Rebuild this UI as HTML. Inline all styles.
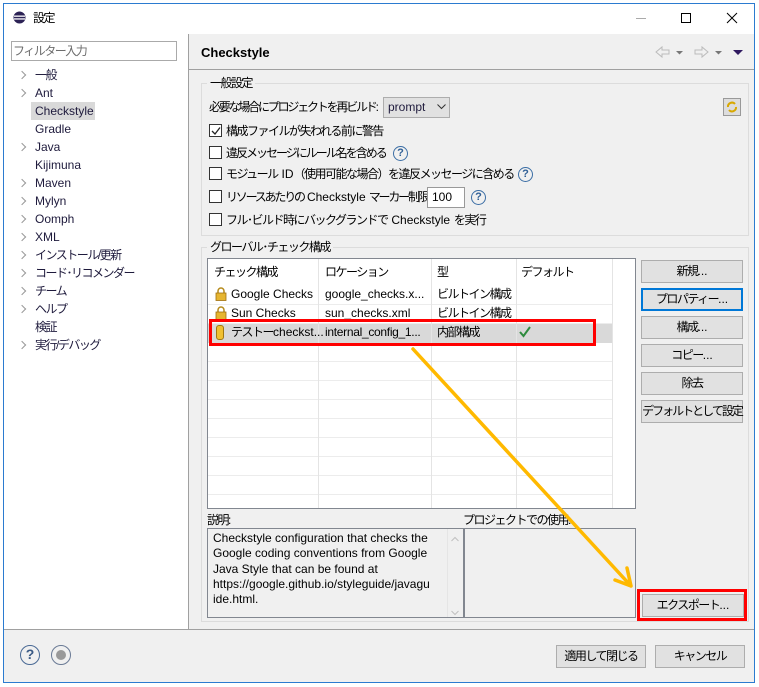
<!DOCTYPE html>
<html><head><meta charset="utf-8"><style>
*{box-sizing:border-box;margin:0;padding:0}
body{width:759px;height:687px;background:#fff;position:relative;overflow:hidden;font-family:"Liberation Sans","Noto Sans CJK JP",sans-serif;font-size:12px;color:#000}
.a{position:absolute;white-space:nowrap}
.t{line-height:18px}
.j{letter-spacing:-1.5px;word-spacing:2px}
.j .l{letter-spacing:0}
.tree{color:#1e1a3c}
.arr{position:absolute;left:19px;width:6px;height:6px;border-right:1.5px solid #999;border-top:1.5px solid #999;transform:rotate(45deg)}
.btn{position:absolute;background:#e1e1e1;border:1px solid #adadad;text-align:center;line-height:21px;font-size:12px;white-space:nowrap;letter-spacing:-1.5px}
.cb{position:absolute;width:13px;height:13px;border:1px solid #333;background:#fff}
.q{position:absolute;width:15px;height:15px;border:1.5px solid #3b6ea5;border-radius:50%;color:#2f5f96;font-weight:bold;font-size:11px;line-height:12px;text-align:center}
.vl{position:absolute;width:1px;background:#e4e4e4}
.hl{position:absolute;height:1px;background:#ececec;left:208px;width:405px}
</style></head><body>
<div class="a" style="left:3px;top:3px;width:752px;height:680px;border:1px solid #2b7bd0;background:#fff"></div>
<svg class="a" style="left:13px;top:11px" width="13" height="13"><circle cx="6.5" cy="6.5" r="6" fill="#2c2255"/><rect x="1" y="4.5" width="11" height="1.3" fill="#fff"/><rect x="1" y="7.3" width="11" height="1.3" fill="#fff"/></svg>
<div class="a j" style="left:33px;top:9px">設定</div>
<div class="a" style="left:636px;top:18px;width:10px;height:1px;background:#aaa"></div>
<div class="a" style="left:681px;top:13px;width:10px;height:10px;border:1px solid #000"></div>
<svg class="a" style="left:726px;top:12px" width="12" height="12"><path d="M1 1L11 11M11 1L1 11" stroke="#000" stroke-width="1"/></svg>
<div class="a" style="left:11px;top:41px;width:166px;height:20px;border:1px solid #aaa"></div>
<div class="a j" style="left:13px;top:42px;color:#6d6d6d;line-height:18px">フィルター入力</div>
<div class="a" style="left:31px;top:102px;width:64px;height:18px;background:#d9d9d9"></div>
<div class="arr" style="top:72px"></div><div class="a t tree j" style="left:35px;top:66px">一般</div>
<div class="arr" style="top:90px"></div><div class="a t tree" style="left:35px;top:84px">Ant</div>
<div class="a t tree" style="left:35px;top:102px">Checkstyle</div>
<div class="a t tree" style="left:35px;top:120px">Gradle</div>
<div class="arr" style="top:144px"></div><div class="a t tree" style="left:35px;top:138px">Java</div>
<div class="a t tree" style="left:35px;top:156px">Kijimuna</div>
<div class="arr" style="top:180px"></div><div class="a t tree" style="left:35px;top:174px">Maven</div>
<div class="arr" style="top:198px"></div><div class="a t tree" style="left:35px;top:192px">Mylyn</div>
<div class="arr" style="top:216px"></div><div class="a t tree" style="left:35px;top:210px">Oomph</div>
<div class="arr" style="top:234px"></div><div class="a t tree" style="left:35px;top:228px">XML</div>
<div class="arr" style="top:252px"></div><div class="a t tree j" style="left:35px;top:246px">インストール/更新</div>
<div class="arr" style="top:270px"></div><div class="a t tree j" style="left:35px;top:264px">コード･リコメンダー</div>
<div class="arr" style="top:288px"></div><div class="a t tree j" style="left:35px;top:282px">チーム</div>
<div class="arr" style="top:306px"></div><div class="a t tree j" style="left:35px;top:300px">ヘルプ</div>
<div class="a t tree j" style="left:35px;top:318px">検証</div>
<div class="arr" style="top:342px"></div><div class="a t tree j" style="left:35px;top:336px">実行/デバッグ</div>
<div class="a" style="left:188px;top:34px;width:566px;height:596px;background:#f0f0f0;border-left:1px solid #a0a0a0"></div>
<div class="a" style="left:4px;top:629px;width:750px;height:53px;background:#f0f0f0;border-top:1px solid #a0a0a0"></div>
<div class="a" style="left:201px;top:44px;font-weight:bold;font-size:13px;line-height:18px">Checkstyle</div>
<div class="a" style="left:189px;top:69px;width:565px;height:1px;background:#a0a0a0"></div>
<svg class="a" style="left:654px;top:44px" width="95" height="16">
<path d="M2 8L8 3V6H15V10H8V13Z" fill="none" stroke="#bbb"/><path d="M22 7h7l-3.5 3.5z" fill="#777"/>
<path d="M54 8L48 3V6H41V10H48V13Z" fill="none" stroke="#bbb"/><path d="M61 7h7l-3.5 3.5z" fill="#777"/>
<path d="M79 6h10l-5 5z" fill="#301a60"/></svg>
<div class="a" style="left:201px;top:83px;width:548px;height:153px;border:1px solid #dcdcdc"></div>
<div class="a j" style="left:207px;top:75px;background:#f0f0f0;padding:0 3px;line-height:16px">一般設定</div>
<div class="a j" style="left:209px;top:98px;line-height:18px;letter-spacing:-2.2px">必要な場合にプロジェクトを再ビルド<span class="l">:</span></div>
<div class="a" style="left:383px;top:97px;width:67px;height:21px;border:1px solid #adadad;background:#e1e1e1"></div>
<div class="a" style="left:388px;top:98px;line-height:18px;color:#1e1a3c">prompt</div>
<svg class="a" style="left:437px;top:104px" width="9" height="6"><path d="M0.5 0.5L4.5 4.5L8.5 0.5" fill="none" stroke="#333"/></svg>
<div class="a" style="left:723px;top:98px;width:18px;height:18px;border:1px solid #999;background:#ddd"></div>
<svg class="a" style="left:725px;top:100px" width="14" height="14"><path d="M3 7A4 4 0 0 1 10 4M11 7A4 4 0 0 1 4 10" fill="none" stroke="#d8a800" stroke-width="2"/></svg>
<div class="cb" style="left:209px;top:124px"></div>
<svg class="a" style="left:211px;top:126px" width="10" height="10"><path d="M1 5L4 8L9 1.5" fill="none" stroke="#222" stroke-width="1.3"/></svg>
<div class="a t j" style="left:226px;top:122px">構成ファイルが失われる前に警告</div>
<div class="cb" style="left:209px;top:146px"></div>
<div class="a t j" style="left:226px;top:144px;letter-spacing:-2px">違反メッセージにルール名を含める</div>
<div class="q" style="left:393px;top:146px">?</div>
<div class="cb" style="left:209px;top:167px"></div>
<div class="a t j" style="left:226px;top:165px">モジュール <span class="l">ID</span>（使用可能な場合）を違反メッセージに含める</div>
<div class="q" style="left:518px;top:167px">?</div>
<div class="cb" style="left:209px;top:190px"></div>
<div class="a t j" style="left:226px;top:188px;letter-spacing:-2.2px">リソースあたりの <span class="l">Checkstyle</span> マーカー制限</div>
<div class="a" style="left:427px;top:187px;width:38px;height:21px;border:1px solid #999;background:#fff;padding-left:4px;line-height:19px">100</div>
<div class="q" style="left:471px;top:190px">?</div>
<div class="cb" style="left:209px;top:213px"></div>
<div class="a t j" style="left:226px;top:211px">フル･ビルド時にバックグランドで <span class="l">Checkstyle</span> を実行</div>
<div class="a" style="left:201px;top:247px;width:548px;height:375px;border:1px solid #dcdcdc"></div>
<div class="a j" style="left:207px;top:239px;background:#f0f0f0;padding:0 3px;line-height:16px">グローバル･チェック構成</div>
<div class="a" style="left:207px;top:258px;width:429px;height:251px;border:1px solid #828790;background:#fff"></div>
<div class="hl" style="top:304px"></div><div class="hl" style="top:323px"></div><div class="hl" style="top:342px"></div><div class="hl" style="top:361px"></div><div class="hl" style="top:380px"></div><div class="hl" style="top:399px"></div><div class="hl" style="top:418px"></div><div class="hl" style="top:437px"></div><div class="hl" style="top:456px"></div><div class="hl" style="top:475px"></div><div class="hl" style="top:494px"></div>
<div class="a" style="left:208px;top:324px;width:405px;height:19px;background:#d9d9d9"></div>
<div class="vl" style="left:318px;top:259px;height:249px"></div>
<div class="vl" style="left:431px;top:259px;height:249px"></div>
<div class="vl" style="left:516px;top:259px;height:249px"></div>
<div class="vl" style="left:612px;top:259px;height:249px"></div>
<div class="a t j" style="left:214px;top:263px">チェック構成</div>
<div class="a t j" style="left:325px;top:263px">ロケーション</div>
<div class="a t j" style="left:437px;top:263px">型</div>
<div class="a t j" style="left:521px;top:263px">デフォルト</div>
<svg class="a" style="left:215px;top:287px" width="12" height="14"><path d="M3 6V4a3 3 0 0 1 6 0V6" fill="none" stroke="#b58a1a" stroke-width="1.5"/><rect x="1" y="6" width="10" height="7.5" fill="#e6b530" stroke="#a07010" stroke-width=".8"/></svg>
<div class="a t" style="left:231px;top:285px">Google Checks</div>
<div class="a t" style="left:325px;top:285px">google_checks.x...</div>
<div class="a t j" style="left:437px;top:285px">ビルトイン構成</div>
<svg class="a" style="left:215px;top:306px" width="12" height="14"><path d="M3 6V4a3 3 0 0 1 6 0V6" fill="none" stroke="#b58a1a" stroke-width="1.5"/><rect x="1" y="6" width="10" height="7.5" fill="#e6b530" stroke="#a07010" stroke-width=".8"/></svg>
<div class="a t" style="left:231px;top:304px">Sun Checks</div>
<div class="a t" style="left:325px;top:304px">sun_checks.xml</div>
<div class="a t j" style="left:437px;top:304px">ビルトイン構成</div>
<div class="a" style="left:216px;top:325px;width:8px;height:15px;background:#f0c030;border:1px solid #a07810;border-radius:3px"></div>
<div class="a t j" style="left:231px;top:323px">テストー<span class="l">checkst...</span></div>
<div class="a t" style="left:325px;top:323px;letter-spacing:-0.3px">internal_config_1...</div>
<div class="a t j" style="left:437px;top:323px">内部構成</div>
<svg class="a" style="left:519px;top:326px" width="12" height="12"><path d="M1 6L4.5 10L11 1" fill="none" stroke="#2e8b3e" stroke-width="2"/></svg>
<div class="a" style="left:209px;top:319px;width:387px;height:27px;border:3px solid #f00"></div>
<div class="btn" style="left:641px;top:260px;width:102px;height:23px">新規<span style="letter-spacing:0">...</span></div>
<div class="btn" style="left:641px;top:288px;width:102px;height:23px;border:2px solid #0078d7;line-height:19px">プロパティー<span style="letter-spacing:0">...</span></div>
<div class="btn" style="left:641px;top:316px;width:102px;height:23px">構成<span style="letter-spacing:0">...</span></div>
<div class="btn" style="left:641px;top:344px;width:102px;height:23px">コピー<span style="letter-spacing:0">...</span></div>
<div class="btn" style="left:641px;top:372px;width:102px;height:23px">除去</div>
<div class="btn" style="left:641px;top:400px;width:102px;height:23px;letter-spacing:-2px">デフォルトとして設定</div>
<div class="a j" style="left:207px;top:512px;line-height:16px">説明<span class="l">:</span></div>
<div class="a j" style="left:463px;top:512px;line-height:16px">プロジェクトでの使用<span class="l">:</span></div>
<div class="a" style="left:207px;top:528px;width:257px;height:90px;border:1px solid #828790;background:#f0f0f0"></div>
<div class="a" style="left:213px;top:531px;line-height:15.3px">Checkstyle configuration that checks the<br>Google coding conventions from Google<br>Java Style that can be found at<br>https://google.github.io/styleguide/javagu<br>ide.html.</div>
<div class="a" style="left:447px;top:529px;width:16px;height:88px;background:#f0f0f0;border-left:1px solid #e5e5e5"></div>
<svg class="a" style="left:451px;top:536px" width="8" height="82"><path d="M0.5 5L4 1.5L7.5 5" fill="none" stroke="#c0c0c0"/><path d="M0.5 75L4 78.5L7.5 75" fill="none" stroke="#c0c0c0"/></svg>
<div class="a" style="left:464px;top:528px;width:172px;height:90px;border:1px solid #828790;background:#f0f0f0"></div>
<div class="btn" style="left:642px;top:594px;width:102px;height:23px">エクスポート<span style="letter-spacing:0">...</span></div>
<div class="a" style="left:637px;top:589px;width:110px;height:32px;border:3px solid #f00"></div>
<svg class="a" style="left:0;top:0" width="759" height="687"><path d="M413 349L631 586M631 586L627 568M631 586L615 580" stroke="#ffb900" stroke-width="3.5" fill="none" stroke-linecap="round"/></svg>
<div class="a" style="left:20px;top:645px;width:20px;height:20px;border:1.5px solid #4a6a95;border-radius:50%;text-align:center;font-weight:bold;color:#3a5a85;font-size:14px;line-height:17px">?</div>
<div class="a" style="left:51px;top:645px;width:20px;height:20px;border:1.5px solid #6a7a95;border-radius:50%"></div>
<div class="a" style="left:56px;top:650px;width:10px;height:10px;background:#999;border-radius:50%"></div>
<div class="btn" style="left:556px;top:645px;width:90px;height:23px">適用して閉じる</div>
<div class="btn" style="left:655px;top:645px;width:90px;height:23px">キャンセル</div>
</body></html>
